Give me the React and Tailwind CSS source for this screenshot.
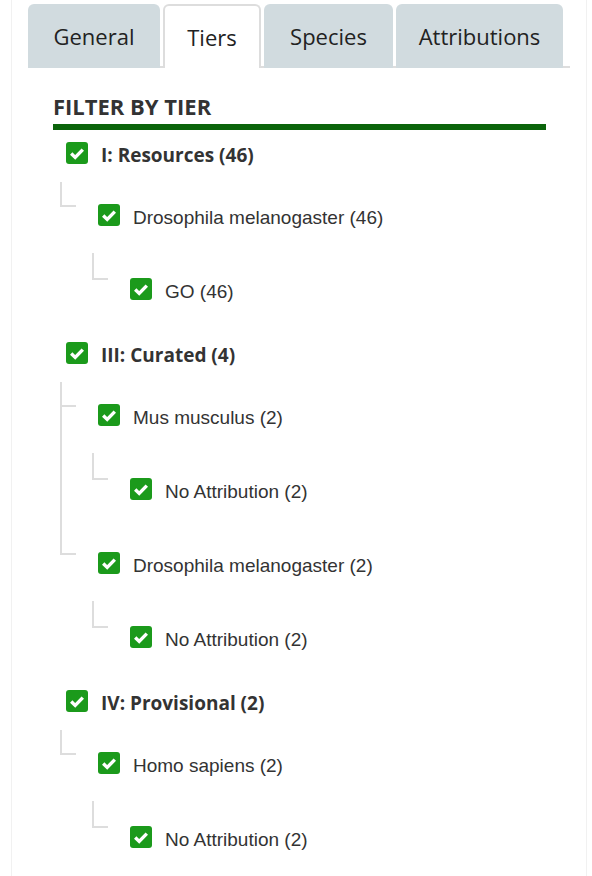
import React from 'react';

const tabs = [
  { label: 'General', w: 'w-[132px]' },
  { label: 'Tiers', w: 'w-[98px]', active: true },
  { label: 'Species', w: 'w-[129px]' },
  { label: 'Attributions', w: 'w-[167px]' },
];

const tiers = [
  {
    label: 'I: Resources (46)',
    species: [{ label: 'Drosophila melanogaster (46)', attrs: ['GO (46)'] }],
  },
  {
    label: 'III: Curated (4)',
    species: [
      { label: 'Mus musculus (2)', attrs: ['No Attribution (2)'] },
      { label: 'Drosophila melanogaster (2)', attrs: ['No Attribution (2)'] },
    ],
  },
  {
    label: 'IV: Provisional (2)',
    species: [{ label: 'Homo sapiens (2)', attrs: ['No Attribution (2)'] }],
  },
];

const CheckBox = () => (
  <span className="flex h-[22px] w-[22px] shrink-0 items-center justify-center rounded-[3px] bg-[#1b9a1b]">
    <svg width="22" height="22" viewBox="0 0 22 22">
      <path d="M5.2 11.6 L9.2 15.4 L16.8 7.6" fill="none" stroke="#fff" strokeWidth="3.4" strokeLinejoin="miter" />
    </svg>
  </span>
);

const Row = ({ children, bold }) => (
  <div className="flex h-[22px] items-center gap-[13px]">
    <CheckBox />
    <span
      className={
        bold
          ? "whitespace-nowrap pt-[4px] font-['Open_Sans',sans-serif] text-[19px] font-bold leading-none text-[#333]"
          : "whitespace-nowrap pt-[4px] font-['Liberation_Sans',Arial,sans-serif] text-[19px] leading-none text-[#333]"
      }
    >
      {children}
    </span>
  </div>
);

export default function App() {
  return (
    <div className="min-h-screen bg-white">
      <div className="ml-[11px] min-h-screen w-[576px] border-x border-[#f1f1f1] px-4 pt-1">
        {/* tabs */}
        <div className="flex border-b-2 border-[#dddddd]">
          {tabs.map((t) => (
            <div
              key={t.label}
              className={`-mb-[2px] mr-[3px] flex h-[64px] ${t.w} items-center justify-center rounded-t-[6px] font-['Open_Sans',sans-serif] text-[22px] text-[#222] ${
                t.active
                  ? 'border-2 border-b-0 border-[#dddddd] bg-white'
                  : 'bg-[#d1dbdf]'
              }`}
            >
              {t.label}
            </div>
          ))}
        </div>

        <div className="pl-[25px] pr-6 pt-[24px]">
          <h3 className="border-b-[6px] border-[#0b640b] pb-[4px] font-['Open_Sans',sans-serif] text-[22px] font-bold uppercase leading-[28px] text-[#333]">
            Filter by Tier
          </h3>

          <ul className="flex flex-col gap-[42px] pl-[13px] pt-[12px]">
            {tiers.map((tier) => (
              <li key={tier.label}>
                <Row bold>{tier.label}</Row>
                <ul className="mt-[40px] flex flex-col gap-[52px] pl-8">
                  {tier.species.map((sp, i) => (
                    <li key={sp.label} className="relative">
                      <span className="absolute left-[-38px] top-[-22px] h-[25px] w-4 border-b-2 border-l-2 border-[#dddddd]" />
                      {i < tier.species.length - 1 && (
                        <span className="absolute bottom-[-52px] left-[-38px] top-[-22px] border-l-2 border-[#dddddd]" />
                      )}
                      <Row>{sp.label}</Row>
                      <ul className="mt-[52px] pl-8">
                        {sp.attrs.map((a) => (
                          <li key={a} className="relative">
                            <span className="absolute left-[-38px] top-[-25px] h-[27px] w-4 border-b-2 border-l-2 border-[#dddddd]" />
                            <Row>{a}</Row>
                          </li>
                        ))}
                      </ul>
                    </li>
                  ))}
                </ul>
              </li>
            ))}
          </ul>
        </div>
      </div>
    </div>
  );
}
